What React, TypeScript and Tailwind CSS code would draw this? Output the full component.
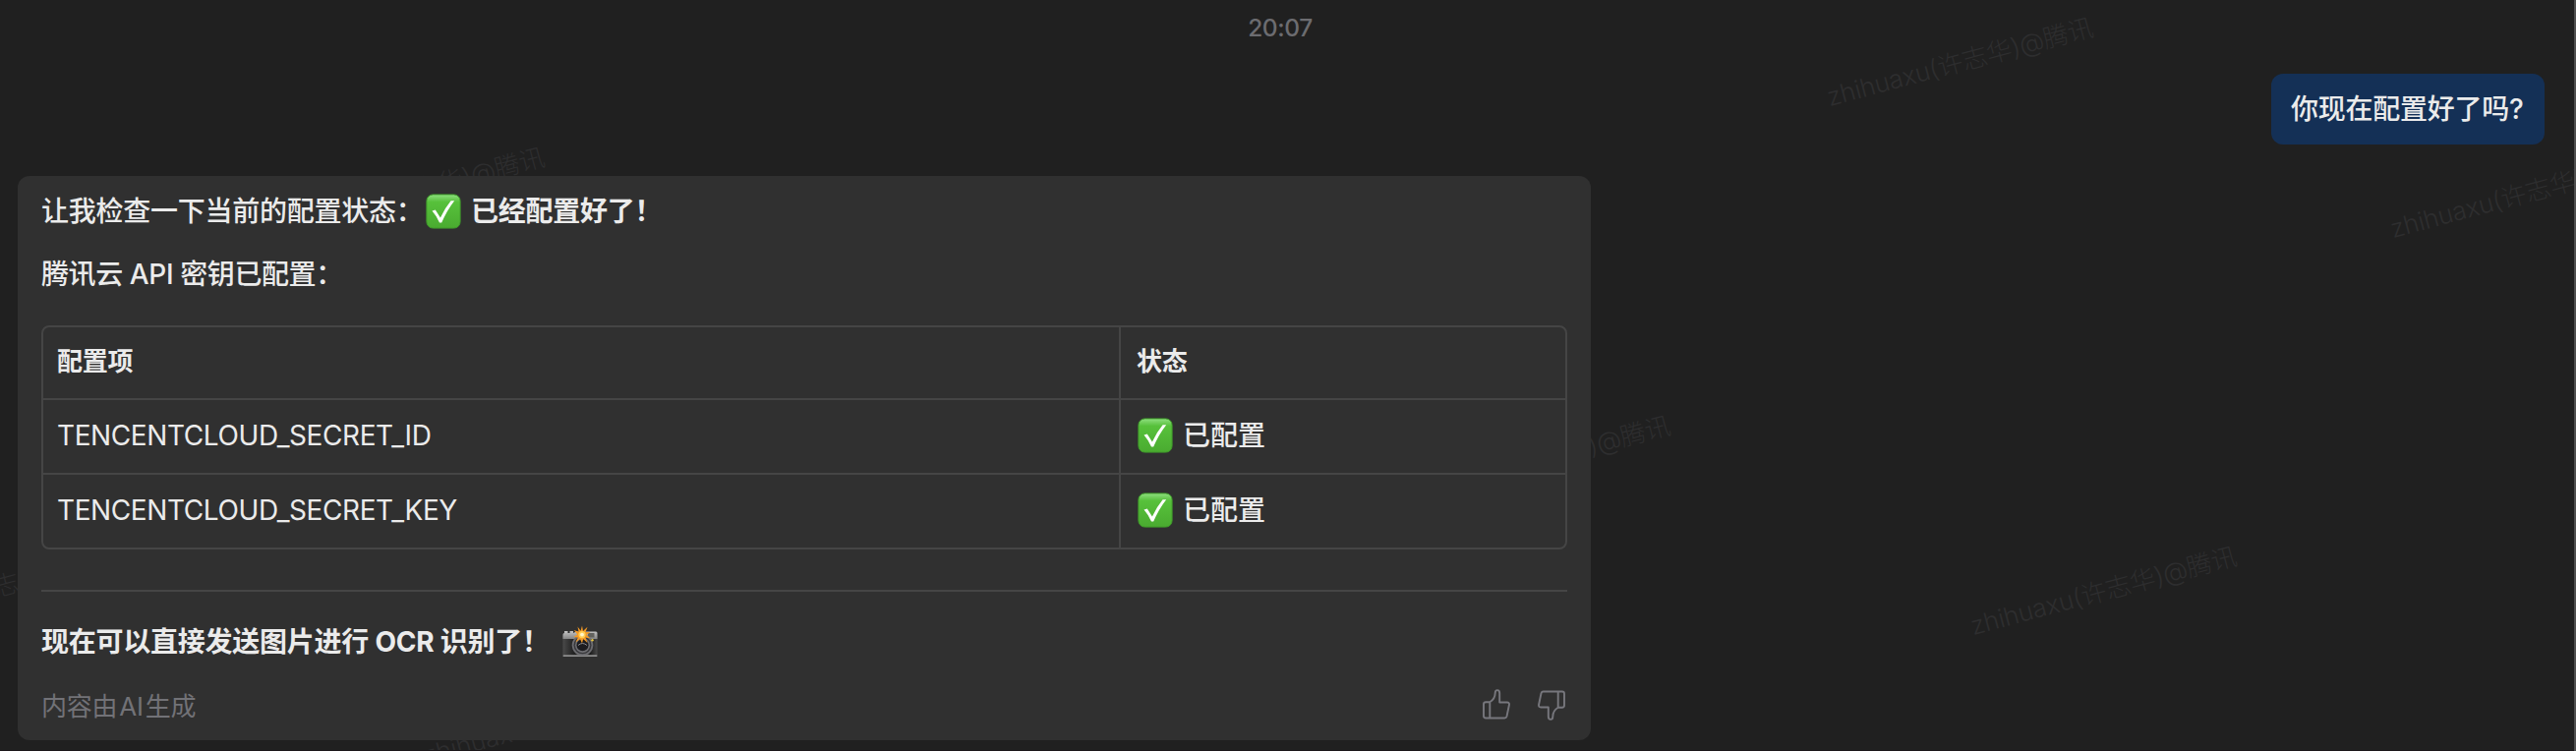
import React from "react";

const CheckEmoji = ({ className = "" }: { className?: string }) => (
  <svg viewBox="0 0 36 36" className={`h-9 w-9 shrink-0 ${className}`} role="img" aria-label="✅">
    <defs>
      <linearGradient id="check-fill" x1="0" y1="0" x2="0" y2="1">
        <stop offset="0" stopColor="#8fe080" />
        <stop offset="0.14" stopColor="#6bcb54" />
        <stop offset="0.22" stopColor="#57c13b" />
        <stop offset="1" stopColor="#4aab30" />
      </linearGradient>
    </defs>
    <rect x="0.9" y="0.9" width="34.2" height="34.2" rx="6.5" fill="url(#check-fill)" stroke="#3f9a2a" strokeWidth="1" />
    <path d="M6.5 17.6L9.8 16.4L14.9 24.6Q19.5 14.5 25.600 7.200H29.200Q21.500 17 16.200 29.600H14Q11.200 23 6.500 17.600Z" fill="#fff" />
  </svg>
);

const CameraEmoji = () => (
  <svg viewBox="0 0 36 36" className="h-9 w-9 shrink-0" role="img" aria-label="📸">
    <defs>
      <linearGradient id="camera-top" x1="0" y1="0" x2="0" y2="1">
        <stop offset="0" stopColor="#c4c4c4" />
        <stop offset="1" stopColor="#858585" />
      </linearGradient>
      <linearGradient id="camera-body" x1="0" y1="0" x2="1" y2="0">
        <stop offset="0" stopColor="#4a4a4a" />
        <stop offset="0.3" stopColor="#232323" />
        <stop offset="0.8" stopColor="#1c1c1c" />
        <stop offset="1" stopColor="#4a4a4a" />
      </linearGradient>
    </defs>
    <rect x="0.5" y="11" width="35" height="21" rx="1" fill="url(#camera-body)" />
    <path d="M0.5 15V10.500Q0.500 9 2 9V7H5.500V9H7.500V7H11V9L14 7.500H34Q35.500 7.500 35.500 9V15Z" fill="url(#camera-top)" />
    <rect x="26" y="9" width="6.500" height="4.500" fill="#62625e" />
    <rect x="0.500" y="31.300" width="35" height="1.700" rx="0.800" fill="#8d8d8d" />
    <circle cx="20.500" cy="21.300" r="10.800" fill="#6c6c70" />
    <circle cx="20.500" cy="21.300" r="9" fill="#38383b" />
    <circle cx="20.500" cy="21.300" r="7.600" fill="#6e6e72" />
    <circle cx="20.500" cy="21.300" r="6" fill="#1c1c1f" />
    <path d="M16 21.500Q20.500 17.500 25 21.500" stroke="#8a8a8e" strokeWidth="1" fill="none" />
    <circle cx="30.500" cy="16.200" r="1.200" fill="#e8c63c" />
    <path
      d="M20 1.500L21 7L25.500 2.800L23.600 8L28.500 8.200L24.500 10.800L28.500 14.500L23.500 13.500L25.500 19L21.200 15L20 19.500L18 15L13.500 18.500L15.800 13.500L11.500 13L15.200 10.500L11.800 6L16.600 7.700L15.500 2.500L18.600 6.800Z"
      fill="#f59a23"
    />
    <circle cx="20" cy="10.600" r="3.600" fill="#ffcf55" />
    <circle cx="20" cy="10.600" r="1.900" fill="#fff6cf" />
  </svg>
);

const Thumb = ({ down = false }: { down?: boolean }) => (
  <svg
    viewBox="0 0 32 32"
    className={`h-8 w-8 ${down ? "rotate-180" : ""}`}
    fill="none"
    stroke="#77777d"
    strokeWidth="1.900"
    strokeLinejoin="round"
    strokeLinecap="round"
  >
    <path d="M9.300 13.200H5.200Q3 13.200 3 15.400V27.300Q3 29.500 5.200 29.500H24.200Q26 29.500 26.500 27.700L28.900 16.300Q29.500 13.500 26.800 13.500H19.200V4Q19.200 1.100 16.900 1.100Q14.700 1.100 14.700 4Q14.600 10 9.300 13.200V29.500" />
  </svg>
);

const marks: [number, number][] = [
  [287, 241],
  [-140, 645],
  [434, 779],
  [1432, 514],
  [1862, 109],
  [2008, 647],
  [2435, 243],
];

const Watermarks = () => (
  <div className="pointer-events-none absolute inset-0 overflow-hidden" aria-hidden="true">
    {marks.map(([x, y]) => (
      <span
        key={`${x},${y}`}
        className="absolute origin-bottom-left -rotate-15 text-[26px] leading-none font-light tracking-[-0.25px] whitespace-nowrap text-[#2e2e2f]"
        style={{ left: x, top: y - 23 }}
      >
        zhihuaxu(许志华)@腾讯
      </span>
    ))}
  </div>
);

const rows = ["TENCENTCLOUD_SECRET_ID", "TENCENTCLOUD_SECRET_KEY"];

export default function App() {
  return (
    <main className="relative h-[764px] w-full overflow-hidden border-r-2 border-[#4f4f4f] bg-[#202020] font-['Inter','Noto_Sans_CJK_SC',sans-serif] text-[28px] leading-10 tracking-[-0.25px] text-[#ebebeb]">
      <Watermarks />
      <div className="relative flex h-full flex-col">
        <time className="flex h-[75px] justify-center pt-2 pr-3.5 text-[24.5px] font-medium tracking-[-0.4px] text-[#6c6c70]">
          20:07
        </time>

        <div className="mr-[30px] flex h-[72px] w-[278px] items-center self-end rounded-xl bg-[#143056] pl-5 font-medium whitespace-nowrap">
          你现在配置好了吗?
        </div>

        <section className="mt-8 ml-[18px] flex h-[574px] w-[1600px] flex-col rounded-xl bg-[#303030] px-6">
          <p className="mt-4 flex h-10 items-center font-medium whitespace-nowrap">
            <span className="w-[391px]">让我检查一下当前的配置状态：</span>
            <CheckEmoji />
            <strong className="ml-2.5 font-bold">已经配置好了！</strong>
          </p>
          <p className="mt-6 h-10 font-medium tracking-[-0.4px] whitespace-nowrap">腾讯云 API 密钥已配置：</p>

          <div className="mt-8 flex h-[228px] w-[1552px] flex-col divide-y-2 divide-[#454545] rounded-lg border-2 border-[#454545]">
            <div className="flex h-[74px] divide-x-2 divide-[#454545] text-[26px] font-bold">
              <div className="flex w-[1096px] items-center pb-0.5 pl-3.5">配置项</div>
              <div className="flex flex-1 items-center pb-0.5 pl-4">状态</div>
            </div>
            {rows.map((name) => (
              <div key={name} className="flex h-[76px] divide-x-2 divide-[#454545] last:h-[74px]">
                <div className="flex w-[1096px] items-center pb-[3px] pl-3.5 tracking-[-0.4px]">{name}</div>
                <div className="flex flex-1 items-center gap-2.5 pb-[3px] pl-[17px] font-medium tracking-normal">
                  <CheckEmoji />
                  已配置
                </div>
              </div>
            ))}
          </div>

          <hr className="mt-[41px] w-[1552px] border-t-2 border-[#454545]" />

          <p className="mt-[31px] flex h-10 items-center font-bold whitespace-nowrap">
            <span className="w-[530px]">现在可以直接发送图片进行 OCR 识别了！</span>
            <CameraEmoji />
          </p>

          <footer className="mt-6 flex h-10 w-[1552px] items-center justify-between text-[26px] text-[#727277]">
            <span className="pt-[3px]">
              内容由<span className="mx-0.5">AI</span>生成
            </span>
            <span className="flex gap-6">
              <Thumb />
              <Thumb down />
            </span>
          </footer>
        </section>
      </div>
      <div className="absolute inset-x-0 bottom-0 h-px bg-[#1c171a]" />
    </main>
  );
}
